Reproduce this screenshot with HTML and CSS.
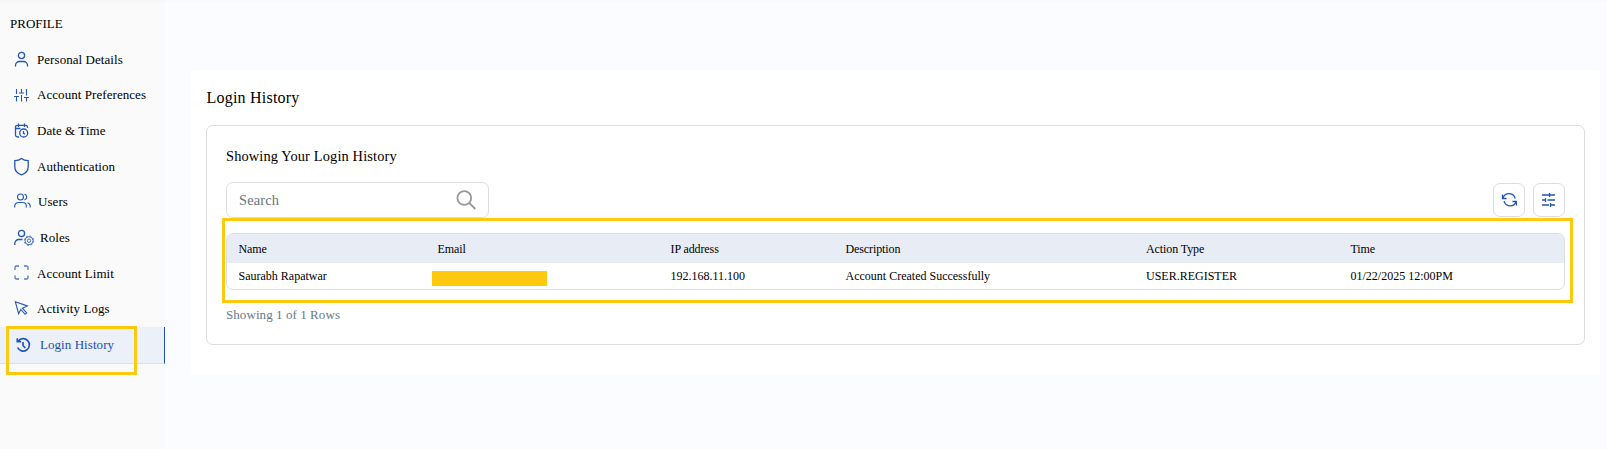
FILE: index.html
```html
<!DOCTYPE html>
<html lang="en">
<head>
<meta charset="utf-8">
<title>Login History</title>
<link rel="stylesheet" href="styles.css">
</head>
<body>
<div class="app">
  <aside class="sidebar">
    <h2 class="sidebar-title">PROFILE</h2>
    <nav class="menu">
      <a class="item"><svg class="icon" width="16" height="18" viewBox="0 0 16 18"><circle cx="7.5" cy="4.500" r="3.1"/><path d="M1.5 15.500v-1.2a3.8 3.8 0 0 1 3.8-3.8h4.400a3.8 3.8 0 0 1 3.8 3.8v1.200"/></svg><span class="label">Personal Details</span></a>
      <a class="item up"><svg class="icon thin" width="16" height="18" viewBox="0 0 16 18"><path d="M2.5 3v5M2.5 11v4.500M7.500 3v3.500M7.500 9v6.500M12.500 3v6.500M12.500 12v3.500M0 10.500h5M5 7h5M10 11.500h5"/></svg><span class="label">Account Preferences</span></a>
      <a class="item"><svg class="icon" width="16" height="18" viewBox="0 0 16 18"><path d="M5 15H3.500A2 2 0 0 1 1.500 13V5a1.700 1.700 0 0 1 1.700-1.700h8.600A1.700 1.700 0 0 1 13.500 5v1M1.500 6.500h5M4.500 1.500v3.500M10.500 1.500v3.500"/><circle cx="9.700" cy="11" r="4"/><path d="M9.500 9v2.300l1.500 1"/></svg><span class="label">Date &amp; Time</span></a>
      <a class="item"><svg class="icon" width="16" height="20" viewBox="0 0 16 20"><path d="M7.500 1.500C5.700 3 3.300 3.700.8 3.700v6c0 4 2.700 6.800 6.700 8.200 4-1.400 6.700-4.200 6.700-8.200v-6c-2.500 0-4.900-.7-6.700-2.200z"/></svg><span class="label">Authentication</span></a>
      <a class="item up"><svg class="icon thin" width="17" height="18" viewBox="0 0 17 18"><circle cx="6.500" cy="5" r="3"/><path d="M.7 15.500V14a3.500 3.500 0 0 1 3.500-3.500h4.600a3.500 3.500 0 0 1 3.500 3.500v1.500M10.500 2.100a3 3 0 0 1 0 5.800M13.500 10.700a3.600 3.600 0 0 1 2.700 3.500v1.300"/></svg><span class="label">Users</span></a>
      <a class="item"><svg class="icon" width="21" height="18" viewBox="0 0 21 18"><circle cx="7.500" cy="4.500" r="3.100"/><path d="M.8 16v-1.500a4 4 0 0 1 4-4h3.700"/><g class="gear"><circle cx="15" cy="11.700" r="4"/><circle cx="15" cy="11.700" r="1.700"/><circle class="teeth" cx="15" cy="11.700" r="4.700"/></g></svg><span class="label">Roles</span></a>
      <a class="item"><svg class="icon soft" width="16" height="18" viewBox="0 0 16 18"><path d="M1 6V3.500A1.500 1.500 0 0 1 2.500 2H5M10 2h2.500A1.500 1.500 0 0 1 14 3.500V6M14 11.500v2a1.500 1.500 0 0 1-1.500 1.500H10M5 15H2.500A1.500 1.500 0 0 1 1 13.500v-2"/></svg><span class="label">Account Limit</span></a>
      <a class="item"><svg class="icon thin" width="16" height="18" viewBox="0 0 16 18"><path d="M1.300 1.700l12 4.200-4.900 2.300 4.300 4.700-1.600 1.400-4.300-4.900L4.600 13.700z"/></svg><span class="label">Activity Logs</span></a>
      <a class="item active"><svg class="icon bold" width="18" height="18" viewBox="0 0 18 18"><path d="M4.300 5A6.200 6.200 0 1 1 3.600 11.500M3.300 2.200v3.500h3.900M9 6v3.500l2.300 2.500"/></svg><span class="label">Login History</span></a>
    </nav>
    <div class="mark mark-menu"></div>
  </aside>
  <main class="content">
    <section class="card">
      <h1 class="title">Login History</h1>
      <div class="panel">
        <h3 class="subtitle">Showing Your Login History</h3>
        <div class="toolbar">
          <div class="search"><span>Search</span><svg class="lens" width="20" height="20" viewBox="0 0 20 20"><circle cx="8.300" cy="8" r="6.900"/><path d="M13.300 13l6 6"/></svg></div>
          <div class="buttons">
            <button class="btn" aria-label="Refresh"><svg class="icon" width="16" height="16" viewBox="0 0 16 16"><path d="M1.500 2.500v4h4M15.500 13.500v-4h-4M2 6A6.300 6.300 0 0 1 14.200 6.700M15 9.700A6.300 6.300 0 0 1 3 9.200"/></svg></button>
            <button class="btn" aria-label="Filter"><svg class="icon" width="16" height="16" viewBox="0 0 16 16"><path d="M1 3h7M8.500 1v4M8.500 3H14M1 8h4M4.500 6v4M6.500 8H14M1 13h7M9.500 11v4M9.500 13H14"/></svg></button>
          </div>
        </div>
        <div class="table-wrap">
          <div class="table">
            <div class="row head"><span>Name</span><span>Email</span><span>IP address</span><span>Description</span><span>Action Type</span><span>Time</span></div>
            <div class="row"><span>Saurabh Rapatwar</span><span class="redacted"></span><span>192.168.11.100</span><span>Account Created Successfully</span><span>USER.REGISTER</span><span>01/22/2025 12:00PM</span></div>
          </div>
          <div class="mark mark-table"></div>
        </div>
        <p class="count">Showing 1 of 1 Rows</p>
      </div>
    </section>
  </main>
</div>
</body>
</html>
```
FILE: styles.css
```css
* { box-sizing: border-box; }
body { margin: 0; font-family: "Liberation Serif", "Times New Roman", serif; color: #000; }
h1, h2, h3, p { margin: 0; font-weight: 400; }
.app { display: flex; height: 449px; background: linear-gradient(#f8f9fb, #fbfcff 4px); overflow: hidden; }
.sidebar { position: relative; width: 165px; flex: none; background: linear-gradient(#f6f6f6, #fafafa 4px); }
.sidebar-title { height: 42px; padding: 16px 0 0 10px; font-size: 13px; line-height: 15px; }
.item { display: flex; align-items: center; height: 35.6px; padding-left: 14px; font-size: 13px; line-height: 15px; }
.item.up { padding-bottom: 1.4px; }
.label { margin-left: 7px; letter-spacing: 0.06px; white-space: nowrap; }
.item:nth-child(6) .label { margin-left: 5px; }
.item.active { height: 37px; background: #ebf0f9; color: #1f4fad; border-bottom: 1px solid #dcdfe5; border-right: 1px solid #1f4fad; }
.item.active .label { margin-left: 8px; }
.icon { flex: none; fill: none; stroke: #2456b5; stroke-width: 1.3; }
.icon.thin { stroke-width: 1.1; }
.icon.soft { stroke: #5479c3; }
.icon.bold { stroke-width: 1.7; }
.gear { stroke-width: 1; stroke: #4770c0; }
.teeth { stroke-dasharray: 1.85 1.84; }
.mark { position: absolute; border: 3px solid #ffc90e; }
.mark-menu { left: 6px; top: 326px; width: 131px; height: 49px; }
.content { flex: 1; padding: 70px 7px 0 26px; }
.card { height: 305px; padding: 18px 15px 0; background: #fff; border-radius: 4px; }
.title { height: 37px; padding-left: 0.5px; font-size: 16px; line-height: 20px; letter-spacing: 0.22px; }
.panel { height: 220px; padding: 22px 19px 0; border: 1px solid #dcdde0; border-radius: 7px; }
.subtitle { height: 34px; font-size: 14.4px; line-height: 17px; letter-spacing: 0.14px; }
.toolbar { display: flex; justify-content: space-between; align-items: center; height: 36px; }
.search { display: flex; align-items: center; justify-content: space-between; width: 263px; height: 36px; padding: 0 12px; border: 1px solid #dcdde0; border-radius: 7px; font-size: 14.4px; color: #6c757d; letter-spacing: 0.15px; }
.lens { fill: none; stroke: #999; stroke-width: 1.8; }
.buttons { display: flex; gap: 8px; }
.btn { display: flex; align-items: center; justify-content: center; width: 32px; height: 34px; padding: 0; background: #fff; border: 1px solid #dcdde0; border-radius: 7px; }
.table-wrap { position: relative; margin-top: 15px; }
.table { height: 57px; border: 1px solid #dcdde0; border-radius: 7px; overflow: hidden; }
.row { display: grid; grid-template-columns: 199px 233px 175px 300.5px 204.5px 1fr; align-items: center; height: 25px; padding-left: 11.5px; font-size: 12px; line-height: 14px; }
.row.head { height: 29px; padding-top: 1px; background: #e8ecf5; letter-spacing: -0.1px; }
.redacted { width: 115px; height: 15px; margin: 5px 0 0 -5.5px; background: #ffc90e; }
.mark-table { left: -4px; top: -15px; width: 1351px; height: 85px; }
.count { padding-top: 17px; font-size: 13px; line-height: 15px; letter-spacing: 0.07px; color: #667888; }
```
